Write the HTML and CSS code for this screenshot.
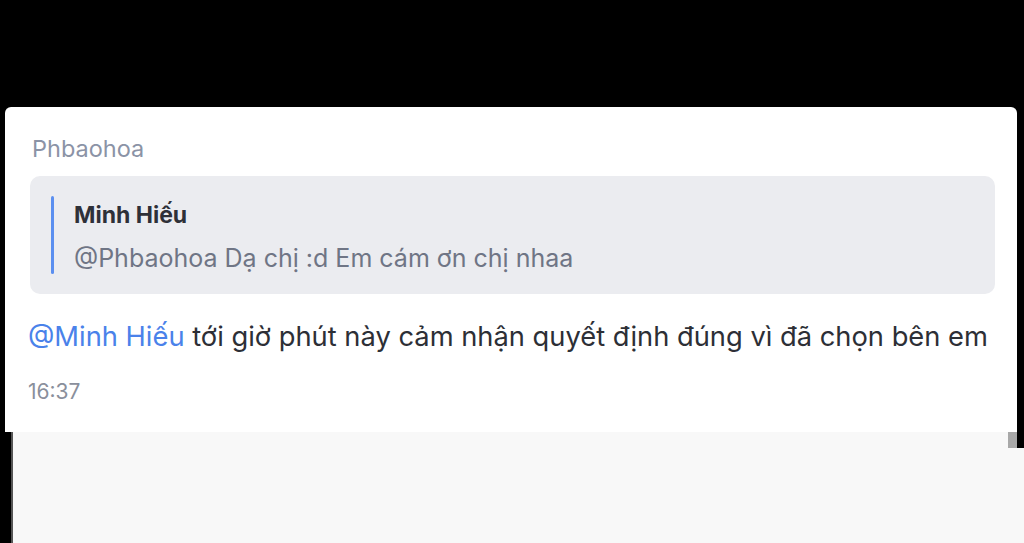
FILE: index.html
```html
<!DOCTYPE html>
<html lang="vi">
<head>
<meta charset="utf-8">
<title>Message</title>
<link rel="stylesheet" href="styles.css">
</head>
<body>
<div class="top"></div>
<div class="row">
  <div class="card">
    <div class="sender">Phbaohoa</div>
    <div class="quote">
      <div class="quote-bar"></div>
      <div class="quote-body">
        <div class="quote-name">Minh Hiếu</div>
        <div class="quote-text">@Phbaohoa Dạ chị :d Em cám ơn chị nhaa</div>
      </div>
    </div>
    <div class="message"><span class="mention">@Minh Hiếu</span> tới giờ phút này cảm nhận quyết định đúng vì đã chọn bên em</div>
    <div class="time">16:37</div>
  </div>
  <div class="right-edge"></div>
</div>
<div class="bottom">
  <div class="left-edge"></div>
  <div class="gray"><div class="nub"></div></div>
  <div class="right-col">
    <div class="right-black"></div>
  </div>
</div>
</body>
</html>
```
FILE: styles.css
```css
html, body {
  margin: 0;
  padding: 0;
  background: #000;
  width: 1024px;
  height: 543px;
  overflow: hidden;
  font-family: Inter, "Noto Sans", sans-serif;
}
body {
  display: flex;
  flex-direction: column;
}
.top {
  height: 107px;
  flex: none;
}
.row {
  display: flex;
  padding-left: 5px;
  flex: none;
}
.card {
  width: 1012px;
  box-sizing: border-box;
  background: #fff;
  border-radius: 6px 6px 0 0;
  padding: 28px 22px 28px 25px;
}
.right-edge {
  flex: 1;
}
.sender {
  color: #8b93a6;
  font-size: 23.5px;
  line-height: 28px;
  margin-left: 2px;
}
.quote {
  margin-top: 13px;
  background: #ebecf0;
  border-radius: 10px;
  display: flex;
  padding: 20px 20px 20px 21px;
  gap: 20px;
}
.quote-bar {
  width: 3px;
  background: #5b8ff0;
  border-radius: 2px;
}
.quote-body {
  display: flex;
  flex-direction: column;
  gap: 11px;
  padding-top: 3px;
}
.quote-name {
  font-weight: 700;
  color: #2e3038;
  font-size: 23px;
  line-height: 32px;
}
.quote-text {
  color: #6f7585;
  font-size: 25px;
  line-height: 32px;
}
.message {
  margin-top: 25px;
  color: #2d2f36;
  font-size: 27.3px;
  line-height: 36px;
  margin-left: -2px;
}
.mention {
  color: #4a82ea;
}
.time {
  margin-top: 25px;
  color: #8a8f9c;
  font-size: 21px;
  line-height: 24px;
  margin-left: -2px;
}
.bottom {
  display: flex;
  flex: 1;
}
.left-edge {
  width: 11px;
  border-right: 2px solid #555;
}
.gray {
  flex: 1;
  background: #f8f8f8;
  display: flex;
  justify-content: flex-end;
  align-items: flex-start;
}
.nub {
  width: 9px;
  height: 16px;
  background: #a8a8a8;
}
.right-col {
  width: 7px;
  background: #f8f8f8;
}
.right-black {
  height: 16px;
  background: #000;
}
```
